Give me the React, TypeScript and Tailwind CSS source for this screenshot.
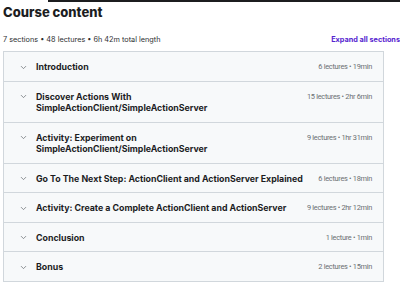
import React from 'react';
import { ChevronDown } from 'lucide-react';

const sections = [
  { title: 'Introduction', meta: '6 lectures • 19min' },
  { title: 'Discover Actions With SimpleActionClient/SimpleActionServer', meta: '15 lectures • 2hr 6min' },
  { title: 'Activity: Experiment on SimpleActionClient/SimpleActionServer', meta: '9 lectures • 1hr 31min' },
  { title: 'Go To The Next Step: ActionClient and ActionServer Explained', meta: '6 lectures • 18min' },
  { title: 'Activity: Create a Complete ActionClient and ActionServer', meta: '9 lectures • 2hr 12min' },
  { title: 'Conclusion', meta: '1 lecture • 1min' },
  { title: 'Bonus', meta: '2 lectures • 15min' },
];

const App = () => {
  return (
    <div className="w-[400px] h-[283px] overflow-hidden bg-white text-[#2d2f31]" style={{ fontFamily: 'Inter, "Noto Sans", sans-serif' }}>
      {/* top strip */}
      <div className="h-[2px] ml-[48px] bg-[#1c1d1f]" />

      <h2 className="pl-[3px] pt-[2px] text-[13px] leading-[17px] font-extrabold text-[#1c1d1f]">
        Course content
      </h2>

      <div className="flex items-center justify-between pl-[3px] mt-[13px] h-[12px]">
        <span className="text-[7.3px] text-[#2d2f31]">7 sections • 48 lectures • 6h 42m total length</span>
        <span className="text-[7.3px] font-bold text-[#5624d0] whitespace-nowrap">Expand all sections</span>
      </div>

      <div className="mt-[5px] ml-[3px] w-[381px] border border-[#d1d7dc]">
        {sections.map((s, i) => (
          <div
            key={i}
            className={`flex items-start bg-[#f7f9fa] pl-[15px] pr-[11px] pt-[9px] pb-[8px] ${i > 0 ? 'border-t border-[#d1d7dc]' : ''}`}
          >
            <ChevronDown className="w-[9px] h-[9px] mt-[1.5px] text-[#6a6f73] shrink-0" strokeWidth={2} />
            <div className="ml-[8px] flex-1 text-[8.8px] leading-[11.5px] font-bold text-[#1c1d1f] pr-2">{s.title}</div>
            <div
              className="text-[7.4px] leading-[11.5px] text-[#6a6f73] whitespace-nowrap tracking-[-0.3px]"
              style={{ fontFamily: 'Roboto, sans-serif' }}
            >
              {s.meta}
            </div>
          </div>
        ))}
      </div>
    </div>
  );
};

export default App;
